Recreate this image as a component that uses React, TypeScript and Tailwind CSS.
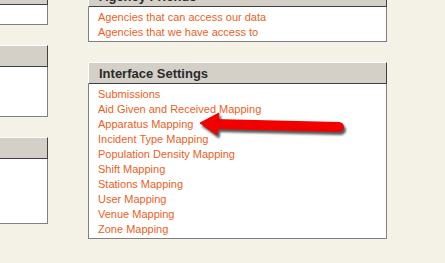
// Admin settings panels with a callout arrow
const agencyLinks = ['Agencies that can access our data', 'Agencies that we have access to'];

const interfaceLinks = [
  'Submissions',
  'Aid Given and Received Mapping',
  'Apparatus Mapping',
  'Incident Type Mapping',
  'Population Density Mapping',
  'Shift Mapping',
  'Stations Mapping',
  'User Mapping',
  'Venue Mapping',
  'Zone Mapping',
];

function Panel({
  title,
  links,
  bodyClass,
}: {
  title: string;
  links?: string[];
  bodyClass?: string;
}) {
  return (
    <div>
      <div className="h-[22px] border-t border-l border-t-white border-l-white border-r border-r-[#404040] border-b border-b-[#404040] bg-[#d4d0c8] pl-[10px] pt-[1px] text-[13px] leading-[20px] font-bold text-[#2b2b2b]">
        {title}
      </div>
      <div className={`border-x border-b border-[#808080] bg-white ${bodyClass ?? ''}`}>
        {links && (
          <ul className="pl-[9px] pt-[3px] pb-[1px]">
            {links.map((l) => (
              <li key={l} className="h-[15px] text-[11px] leading-[15px] text-[#ec5f24]">
                <a href="#" onClick={(e) => e.preventDefault()}>
                  {l}
                </a>
              </li>
            ))}
          </ul>
        )}
      </div>
    </div>
  );
}

export default function App() {
  return (
    <div
      className="relative h-[263px] w-[445px] overflow-hidden bg-[#f4f1e7]"
      style={{ fontFamily: '"Liberation Sans", Arial, sans-serif' }}
    >
      <div className="flex">
        {/* left column */}
        <div className="-ml-[12px] -mt-[17px] flex w-[60px] flex-col gap-[20px]">
          <Panel title="" bodyClass="h-[20px]" />
          <Panel title="" bodyClass="h-[50px]" />
          <Panel title="" bodyClass="h-[65px]" />
        </div>

        {/* right column */}
        <div className="ml-[40px] -mt-[15px] flex w-[299px] flex-col gap-[20px]">
          <Panel title="Agency Friends" links={agencyLinks} />
          <Panel title="Interface Settings" links={interfaceLinks} />
        </div>
      </div>

      {/* callout arrow */}
      <svg className="absolute left-0 top-0" width="445" height="263" viewBox="0 0 445 263">
        <defs>
          <filter id="sh" x="-10%" y="-50%" width="120%" height="200%">
            <feGaussianBlur stdDeviation="1.2" />
          </filter>
        </defs>
        <g transform="translate(2 3)" fill="#222" stroke="#222" opacity="0.75" filter="url(#sh)">
          <path d="M200 123 L219 113 L217 135 Z" strokeWidth="1" />
          <line x1="214" y1="124" x2="339" y2="127" strokeWidth="10" strokeLinecap="round" />
        </g>
        <g fill="#f20000" stroke="#f20000">
          <path d="M200 123 L219 113 L217 135 Z" strokeWidth="1" strokeLinejoin="round" />
          <line x1="214" y1="124" x2="339" y2="127" strokeWidth="10" strokeLinecap="round" />
        </g>
      </svg>
    </div>
  );
}
